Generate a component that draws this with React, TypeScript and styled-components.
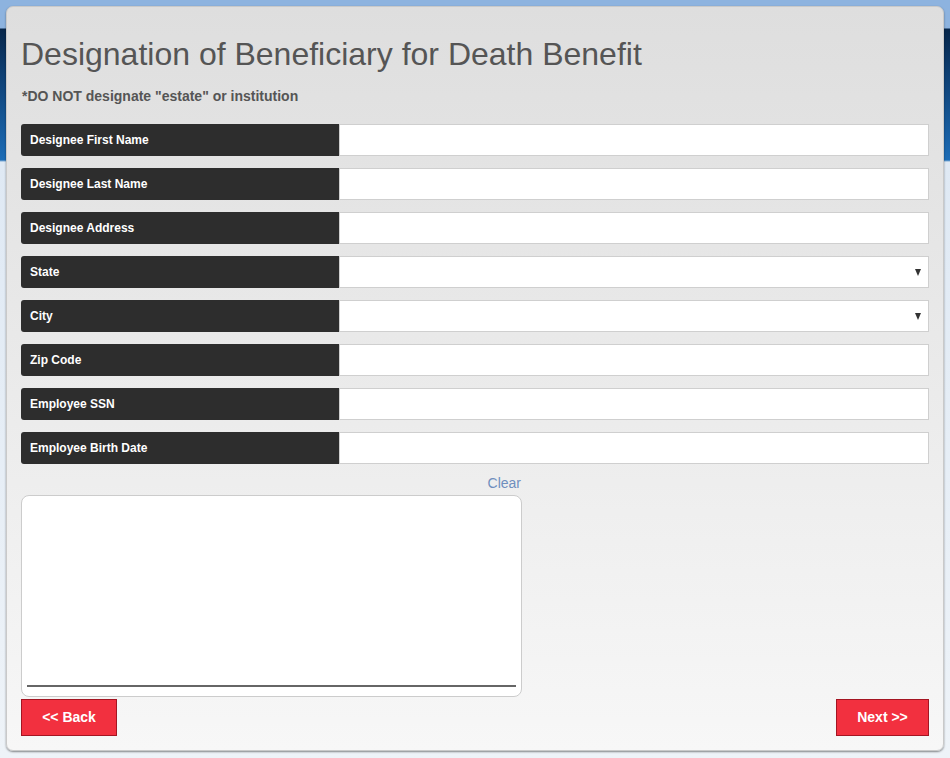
import React from "react";
import styled, {createGlobalStyle} from "styled-components";

const GlobalStyle = createGlobalStyle`
  html, body {
    margin: 0;
    padding: 0;
  }
  body {
    font-family: "Liberation Sans", Arial, sans-serif;
    background: linear-gradient(
      to bottom,
      #8db3df 0px,
      #8db3df 28px,
      #07264a 29px,
      #0d3d70 70px,
      #1c6cb6 160px,
      #dfe9f4 162px,
      #eef3f8 758px
    );
    min-height: 758px;
  }
`;

const Page = styled.div`
  padding: 6px 6px 7px 6px;
`;

const Panel = styled.div`
  box-sizing: border-box;
  height: 745px;
  border-radius: 7px;
  border: 1px solid #c9c9c9;
  box-shadow: 0 1px 2px rgba(0, 0, 0, 0.45);
  background: linear-gradient(to bottom, #dedede 0%, #f7f7f7 100%);
  padding: 0 14px 0 14px;
  display: flex;
  flex-direction: column;
`;

const Title = styled.h1`
  margin: 29px 0 0 0;
  font-size: 32px;
  font-weight: normal;
  line-height: 36px;
  color: #555555;
`;

const Note = styled.p`
  margin: 16px 0 0 1px;
  font-size: 14px;
  font-weight: bold;
  line-height: 16px;
  color: #555555;
`;

const Fields = styled.div`
  margin-top: 20px;
  display: flex;
  flex-direction: column;
  gap: 12px;
`;

const Row = styled.div`
  display: flex;
  height: 32px;
`;

const Label = styled.div`
  box-sizing: border-box;
  width: 318px;
  flex: none;
  background: #2d2d2d;
  border-radius: 3px 0 0 3px;
  color: #ffffff;
  font-size: 12px;
  font-weight: bold;
  display: flex;
  align-items: center;
  padding-left: 9px;
`;

const Field = styled.div`
  box-sizing: border-box;
  flex: 1;
  position: relative;
  background: #ffffff;
  border: 1px solid #cfcfcf;
`;

const Caret = styled.span`
  position: absolute;
  right: 7px;
  top: 12px;
  width: 0;
  height: 0;
  border-left: 3.5px solid transparent;
  border-right: 3.5px solid transparent;
  border-top: 7px solid #333333;
`;

const SignArea = styled.div`
  width: 501px;
  display: flex;
  flex-direction: column;
  align-items: flex-end;
  margin-top: 11px;
`;

const ClearLink = styled.a`
  font-size: 14px;
  line-height: 16px;
  color: #6f8fbe;
  margin-right: 1px;
  cursor: pointer;
`;

const SignPad = styled.div`
  box-sizing: border-box;
  margin-top: 4px;
  width: 501px;
  height: 202px;
  background: #ffffff;
  border: 1px solid #cccccc;
  border-radius: 8px;
  display: flex;
  align-items: flex-end;
  padding: 0 5px 9px 5px;
`;

const SignLine = styled.div`
  flex: 1;
  height: 2px;
  background: #666666;
`;

const Actions = styled.div`
  display: flex;
  justify-content: space-between;
  margin-top: 2px;
`;

const NavButton = styled.button<{$w: number}>`
  box-sizing: border-box;
  width: ${(p) => p.$w}px;
  height: 37px;
  background: #f2303f;
  border: 1px solid #a41522;
  color: #ffffff;
  font-family: "Liberation Sans", Arial, sans-serif;
  font-size: 14px;
  font-weight: bold;
  line-height: 16px;
  cursor: pointer;
  padding: 0 0 2px 0;
`;

const fields: {label: string; select?: boolean}[] = [
  {label: "Designee First Name"},
  {label: "Designee Last Name"},
  {label: "Designee Address"},
  {label: "State", select: true},
  {label: "City", select: true},
  {label: "Zip Code"},
  {label: "Employee SSN"},
  {label: "Employee Birth Date"},
];

const App: React.FC = () => {
  return (
    <>
      <GlobalStyle />
      <Page>
        <Panel>
          <Title>Designation of Beneficiary for Death Benefit</Title>
          <Note>*DO NOT designate "estate" or institution</Note>
          <Fields>
            {fields.map((f) => (
              <Row key={f.label}>
                <Label>{f.label}</Label>
                <Field>{f.select && <Caret />}</Field>
              </Row>
            ))}
          </Fields>
          <SignArea>
            <ClearLink>Clear</ClearLink>
            <SignPad>
              <SignLine />
            </SignPad>
          </SignArea>
          <Actions>
            <NavButton $w={96}>&lt;&lt; Back</NavButton>
            <NavButton $w={93}>Next &gt;&gt;</NavButton>
          </Actions>
        </Panel>
      </Page>
    </>
  );
};

export default App;
